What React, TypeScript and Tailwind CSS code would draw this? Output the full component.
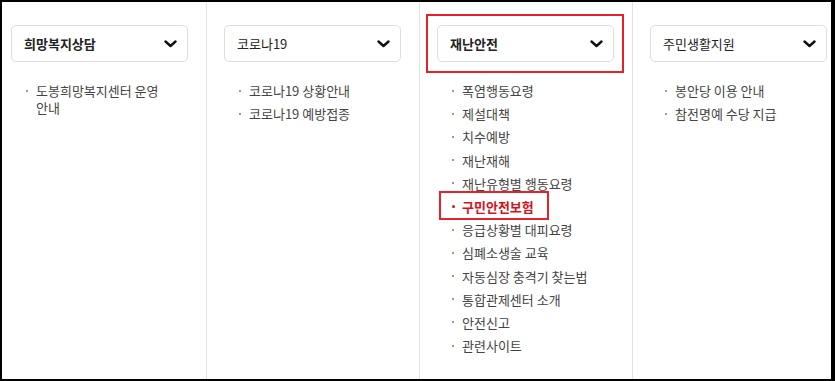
const columns = [
  {
    title: "희망복지상담",
    bold: true,
    items: ["도봉희망복지센터 운영 안내"],
  },
  {
    title: "코로나19",
    bold: false,
    items: ["코로나19 상황안내", "코로나19 예방접종"],
  },
  {
    title: "재난안전",
    bold: true,
    marked: true,
    items: [
      "폭염행동요령",
      "제설대책",
      "치수예방",
      "재난재해",
      "재난유형별 행동요령",
      "구민안전보험",
      "응급상황별 대피요령",
      "심폐소생술 교육",
      "자동심장 충격기 찾는법",
      "통합관제센터 소개",
      "안전신고",
      "관련사이트",
    ],
    active: "구민안전보험",
  },
  {
    title: "주민생활지원",
    bold: false,
    items: ["봉안당 이용 안내", "참전명예 수당 지급"],
  },
];

const Chevron = () => (
  <svg width="13" height="8" viewBox="0 0 13 8" fill="none">
    <polyline
      points="1.5,1.5 6.5,6 11.5,1.5"
      stroke="#111"
      strokeWidth="2.4"
      strokeLinecap="round"
      strokeLinejoin="round"
    />
  </svg>
);

const colWidths = ["w-[205px] pl-[9px]", "w-[213px] pl-[17px]", "w-[213px] pl-[17px]", "flex-1 pl-[17px]"];

export default function App() {
  return (
    <div className="w-[835px] h-[381px] bg-white">
      <div
        className="flex w-full h-full border-t-2 border-l-2 border-b-2 border-r-4 border-black text-[#444]"
        style={{ fontFamily: '"Noto Sans CJK KR", "Noto Sans", sans-serif' }}
      >
        {columns.map((col, i) => (
          <div
            key={col.title}
            className={`${colWidths[i]} h-full pt-[23px] ${i < 3 ? "border-r border-[#e2e2e2]" : ""}`}
          >
            {/* select box */}
            <div className="relative w-[177px]">
              <div className="flex items-center justify-between h-[37px] pl-[12px] pr-[10px] border border-[#dedede] rounded-[5px] bg-white">
                <span
                  className={`text-[13px] leading-none text-[#222] ${col.bold ? "font-bold" : "font-normal"}`}
                >
                  {col.title}
                </span>
                <Chevron />
              </div>
              {col.marked && (
                <div className="absolute left-[-11px] right-[-10px] top-[-11px] bottom-[-11px] border-2 border-[#e8202a] pointer-events-none" />
              )}
            </div>

            {/* list */}
            <ul className="w-[177px] mt-[20px] pl-[15px] pr-[12px] flex flex-col gap-[6.2px]">
              {col.items.map((item) => {
                const on = item === col.active;
                return (
                  <li
                    key={item}
                    className={`relative flex items-start text-[13px] leading-[17px] ${
                      on ? "text-[#d7111b] font-bold" : ""
                    }`}
                  >
                    <span className="w-[10px] h-[17px] shrink-0 flex items-center">
                      <span
                        className={`rounded-full ${on ? "w-[3px] h-[3px] bg-[#d7111b]" : "w-[2px] h-[2px] bg-[#777]"}`}
                      />
                    </span>
                    <span className="break-keep">{item}</span>
                    {on && (
                      <span className="absolute left-[-13px] top-[-7px] w-[110px] h-[29px] border-2 border-[#e8202a] pointer-events-none" />
                    )}
                  </li>
                );
              })}
            </ul>
          </div>
        ))}
      </div>
    </div>
  );
}
